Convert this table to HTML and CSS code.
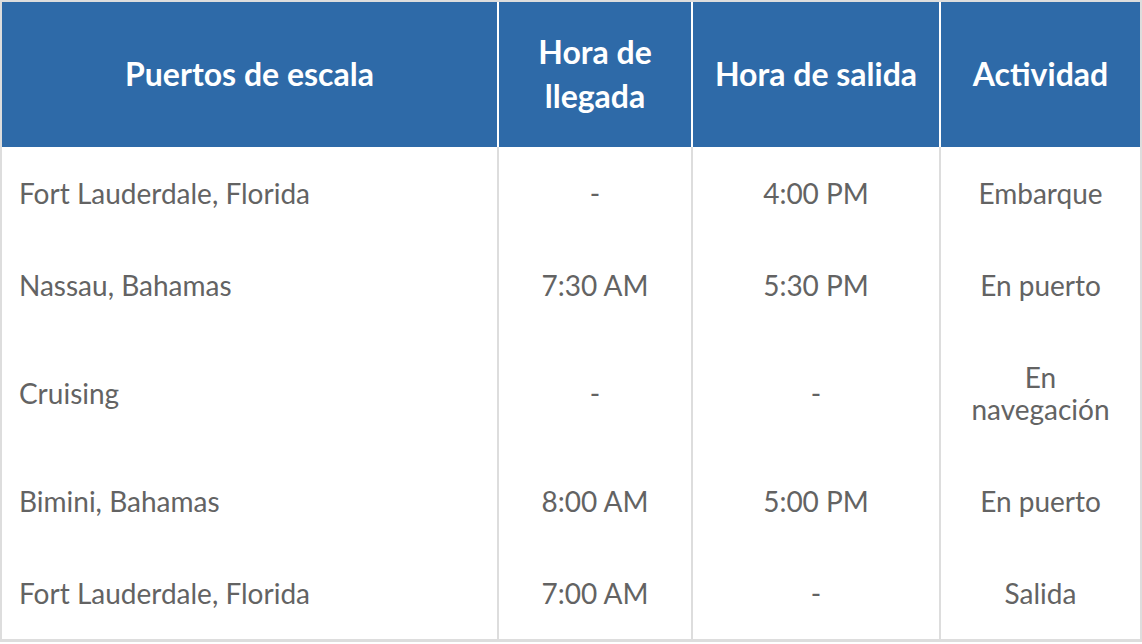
FILE: index.html
```html
<!DOCTYPE html>
<html lang="es">
<head>
<meta charset="utf-8">
<title>Itinerario</title>
<link rel="stylesheet" href="styles.css">
</head>
<body>
<table class="itinerary">
  <thead>
    <tr>
      <th class="c1">Puertos de escala</th>
      <th class="c2">Hora de llegada</th>
      <th class="c3">Hora de salida</th>
      <th class="c4">Actividad</th>
    </tr>
  </thead>
  <tbody>
    <tr>
      <td class="port">Fort Lauderdale, Florida</td>
      <td>-</td>
      <td>4:00 PM</td>
      <td>Embarque</td>
    </tr>
    <tr>
      <td class="port">Nassau, Bahamas</td>
      <td>7:30 AM</td>
      <td>5:30 PM</td>
      <td>En puerto</td>
    </tr>
    <tr>
      <td class="port">Cruising</td>
      <td>-</td>
      <td>-</td>
      <td>En navegación</td>
    </tr>
    <tr>
      <td class="port">Bimini, Bahamas</td>
      <td>8:00 AM</td>
      <td>5:00 PM</td>
      <td>En puerto</td>
    </tr>
    <tr>
      <td class="port">Fort Lauderdale, Florida</td>
      <td>7:00 AM</td>
      <td>-</td>
      <td>Salida</td>
    </tr>
  </tbody>
</table>
</body>
</html>
```
FILE: styles.css
```css
html, body {
  margin: 0;
  padding: 0;
  background: #fff;
}

.itinerary {
  width: 1142px;
  table-layout: fixed;
  border-collapse: separate;
  border-spacing: 0;
  border: 2px solid #dddddd;
  border-bottom-width: 3px;
  font-family: Lato, "Open Sans", sans-serif;
}

.itinerary th {
  box-sizing: border-box;
  background: #2e6aa8;
  color: #ffffff;
  font-weight: 700;
  font-size: 32px;
  line-height: 44px;
  padding: 28px 17px 29px;
  text-align: center;
  vertical-align: middle;
}

.itinerary th + th {
  border-left: 2px solid #ffffff;
}

.itinerary .c1 { width: 495px; }
.itinerary .c2 { width: 194px; }
.itinerary .c3 { width: 248px; }
.itinerary .c4 { width: 201px; }

.itinerary td {
  color: #636363;
  font-size: 28px;
  line-height: 32px;
  padding: 30px 17px;
  text-align: center;
  vertical-align: middle;
}

.itinerary td + td {
  border-left: 2px solid #dddddd;
}

.itinerary td.port {
  text-align: left;
}
```
